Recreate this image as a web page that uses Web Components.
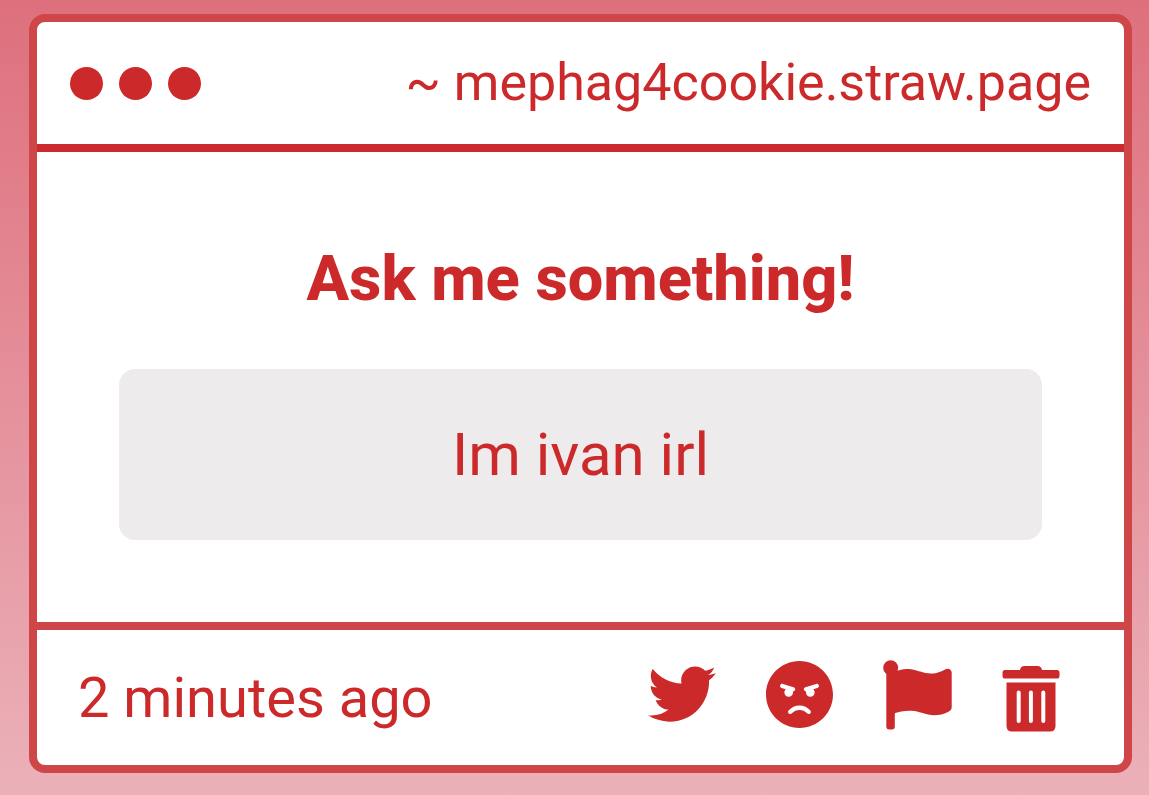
<!DOCTYPE html>
<html lang="en">
<head>
<meta charset="utf-8">
<meta name="viewport" content="width=device-width, initial-scale=1">
<title>Ask me something!</title>
<style>
  html { min-height: 100%; background: linear-gradient(#de707d, #ebb1b9); }
  body { margin: 0; padding: 14px 17px 22px 29px; font-family: Roboto, "Liberation Sans", sans-serif; color: #cc292b; }
</style>
</head>
<body>
<ask-card>
  <window-bar slot="header">~ mephag4cookie.straw.page</window-bar>
  <ask-question>
    <span slot="title">Ask me something!</span>
    Im ivan irl
  </ask-question>
  <card-footer slot="footer">
    2 minutes ago
    <icon-button slot="actions" icon="twitter" label="Share on Twitter"></icon-button>
    <icon-button slot="actions" icon="angry" label="Block"></icon-button>
    <icon-button slot="actions" icon="flag" label="Report"></icon-button>
    <icon-button slot="actions" icon="trash" label="Delete"></icon-button>
  </card-footer>
</ask-card>

<script>
const define = (name, html) => customElements.define(name, class extends HTMLElement {
  constructor() {
    super();
    this.attachShadow({ mode: "open" }).innerHTML = html;
  }
});

define("ask-card", `
  <style>
    :host { display: block; background: #fff; border: 8px solid #cf4649; border-radius: 16px; }
    header { border-bottom: 8px solid #cb2b2e; }
    footer { border-top: 8px solid #cf4649; }
  </style>
  <header><slot name="header"></slot></header>
  <main><slot></slot></main>
  <footer><slot name="footer"></slot></footer>`);

define("window-bar", `
  <style>
    :host { display: flex; align-items: center; justify-content: space-between; height: 122px; padding: 0 33px; font-size: 52px; line-height: 60px; }
    .dots { display: flex; gap: 16px; }
    i { width: 33px; height: 33px; border-radius: 50%; background: currentColor; }
  </style>
  <div class="dots" aria-hidden="true"><i></i><i></i><i></i></div>
  <span><slot></slot></span>`);

define("ask-question", `
  <style>
    :host { display: block; padding: 90px 82px 82px; text-align: center; }
    h1 { margin: 0 0 53px; font-size: 63px; line-height: 74px; font-weight: 800; }
    p { margin: 0; padding: 50px 32px; border-radius: 16px; background: #edebec; font-size: 60px; line-height: 71px; }
  </style>
  <h1><slot name="title"></slot></h1>
  <p><slot></slot></p>`);

define("card-footer", `
  <style>
    :host { display: flex; align-items: center; justify-content: space-between; height: 135px; padding: 0 64px 0 41px; font-size: 56px; line-height: 66px; }
    nav { display: flex; gap: 50px; }
  </style>
  <time><slot></slot></time>
  <nav aria-label="Actions"><slot name="actions"></slot></nav>`);

const icons = {
  twitter: [68, "0 0 512 572", `<path d="M459.37 151.716c.325 4.548.325 9.097.325 13.645 0 138.72-105.583 298.558-298.558 298.558-59.452 0-114.68-17.219-161.137-47.106 8.447.974 16.568 1.299 25.34 1.299 49.055 0 94.213-16.568 130.274-44.832-46.132-.975-84.792-31.188-98.112-72.772 6.498.974 12.995 1.624 19.818 1.624 9.421 0 18.843-1.3 27.614-3.573-48.081-9.747-84.143-51.98-84.143-102.985v-1.299c13.969 7.797 30.214 12.67 47.431 13.319-28.264-18.843-46.781-51.005-46.781-87.391 0-19.492 5.197-37.36 14.294-52.954 51.655 63.675 129.3 105.258 216.365 109.807-1.624-7.797-2.599-15.918-2.599-24.04 0-57.828 46.782-104.934 104.934-104.934 30.213 0 57.502 12.67 76.67 33.137 23.715-4.548 46.456-13.32 66.599-25.34-7.798 24.366-24.366 44.833-46.132 57.827 21.117-2.273 41.584-8.122 60.426-16.243-14.292 20.791-32.161 39.308-52.628 54.253z"/>`],
  angry: [67, "0 0 496 562", `<path d="M248 8C111 8 0 119 0 256s111 248 248 248 248-111 248-248S385 8 248 8zM136 240c0-9.3 4.1-17.5 10.5-23.4l-31-9.3c-8.5-2.5-13.3-11.5-10.7-19.9 2.5-8.5 11.4-13.2 19.9-10.7l80 24c8.5 2.5 13.3 11.5 10.7 19.9-2.1 6.9-8.4 11.4-15.3 11.4-.5 0-1.1-.2-1.7-.2.7 2.7 1.7 5.3 1.7 8.2 0 17.7-14.3 32-32 32S136 257.7 136 240zm168 154.2c-27.8-33.4-84.2-33.4-112.1 0-13.5 16.3-38.2-4.2-24.6-20.5 20-24 49.4-37.8 80.6-37.8s60.6 13.8 80.6 37.8c13.8 16.5-11.1 36.6-24.5 20.5zm76.6-186.9l-31 9.3c6.3 5.8 10.5 14.1 10.5 23.4 0 17.7-14.3 32-32 32s-32-14.3-32-32c0-2.9.9-5.6 1.7-8.2-.6.1-1.1.2-1.7.2-6.9 0-13.2-4.5-15.3-11.4-2.5-8.5 2.3-17.4 10.7-19.9l80-24c8.4-2.5 17.4 2.3 19.9 10.7 2.5 8.5-2.3 17.4-10.8 19.9z"/>`],
  flag: [69, "0 0 69 76", `<circle cx="7.7" cy="7.700" r="7.5"/><path d="M3.3 8h8.500v58.5a3 3 0 0 1-3 3h-2.500a3 3 0 0 1-3-3z"/><path d="M10 12.500C16 9.500 22 8.300 28 9.300c8 1.300 13 4.300 20 4.200 6 0 11-2.500 14.500-4.300 3.300-1.500 6.200.3 6.200 3.600v34.500c0 2-1 3.200-2.700 4.100-5 2.700-10 3.800-15 3.800-8 0-15-4.100-22.500-4.400-6.500-.3-12.500 1-18.500 3z"/>`],
  trash: [58, "0 0 58 76", `<path fill-rule="evenodd" d="M2.500 10H18c.5-2.500 2-4 4.500-4h13c2.500 0 4 1.500 4.500 4h15.500q2 0 2 2.500v3.500q0 2.500-2 2.500h-53q-2 0-2-2.500v-3.500q0-2.500 2-2.500zM4.500 22.500h49V66q0 5.500-5.500 5.500H10Q4.500 71.500 4.500 66zM16.700 30.500a2 2 0 0 0-2 2V61a2 2 0 0 0 4 0V32.500a2 2 0 0 0-2-2zm12.200 0a2 2 0 0 0-2 2V61a2 2 0 0 0 4 0V32.500a2 2 0 0 0-2-2zm12.400 0a2 2 0 0 0-2 2V61a2 2 0 0 0 4 0V32.500a2 2 0 0 0-2-2z"/>`]
};

customElements.define("icon-button", class extends HTMLElement {
  connectedCallback() {
    const [width, box, shape] = icons[this.getAttribute("icon")];
    this.attachShadow({ mode: "open" }).innerHTML = `
      <style>
        :host { display: block; }
        button { display: block; margin: 0; padding: 0; border: 0; background: none; color: inherit; cursor: pointer; }
        svg { display: block; height: 76px; fill: currentColor; }
      </style>
      <button type="button" aria-label="${this.getAttribute("label")}">
        <svg width="${width}" viewBox="${box}" aria-hidden="true">${shape}</svg>
      </button>`;
  }
});
</script>
</body>
</html>
